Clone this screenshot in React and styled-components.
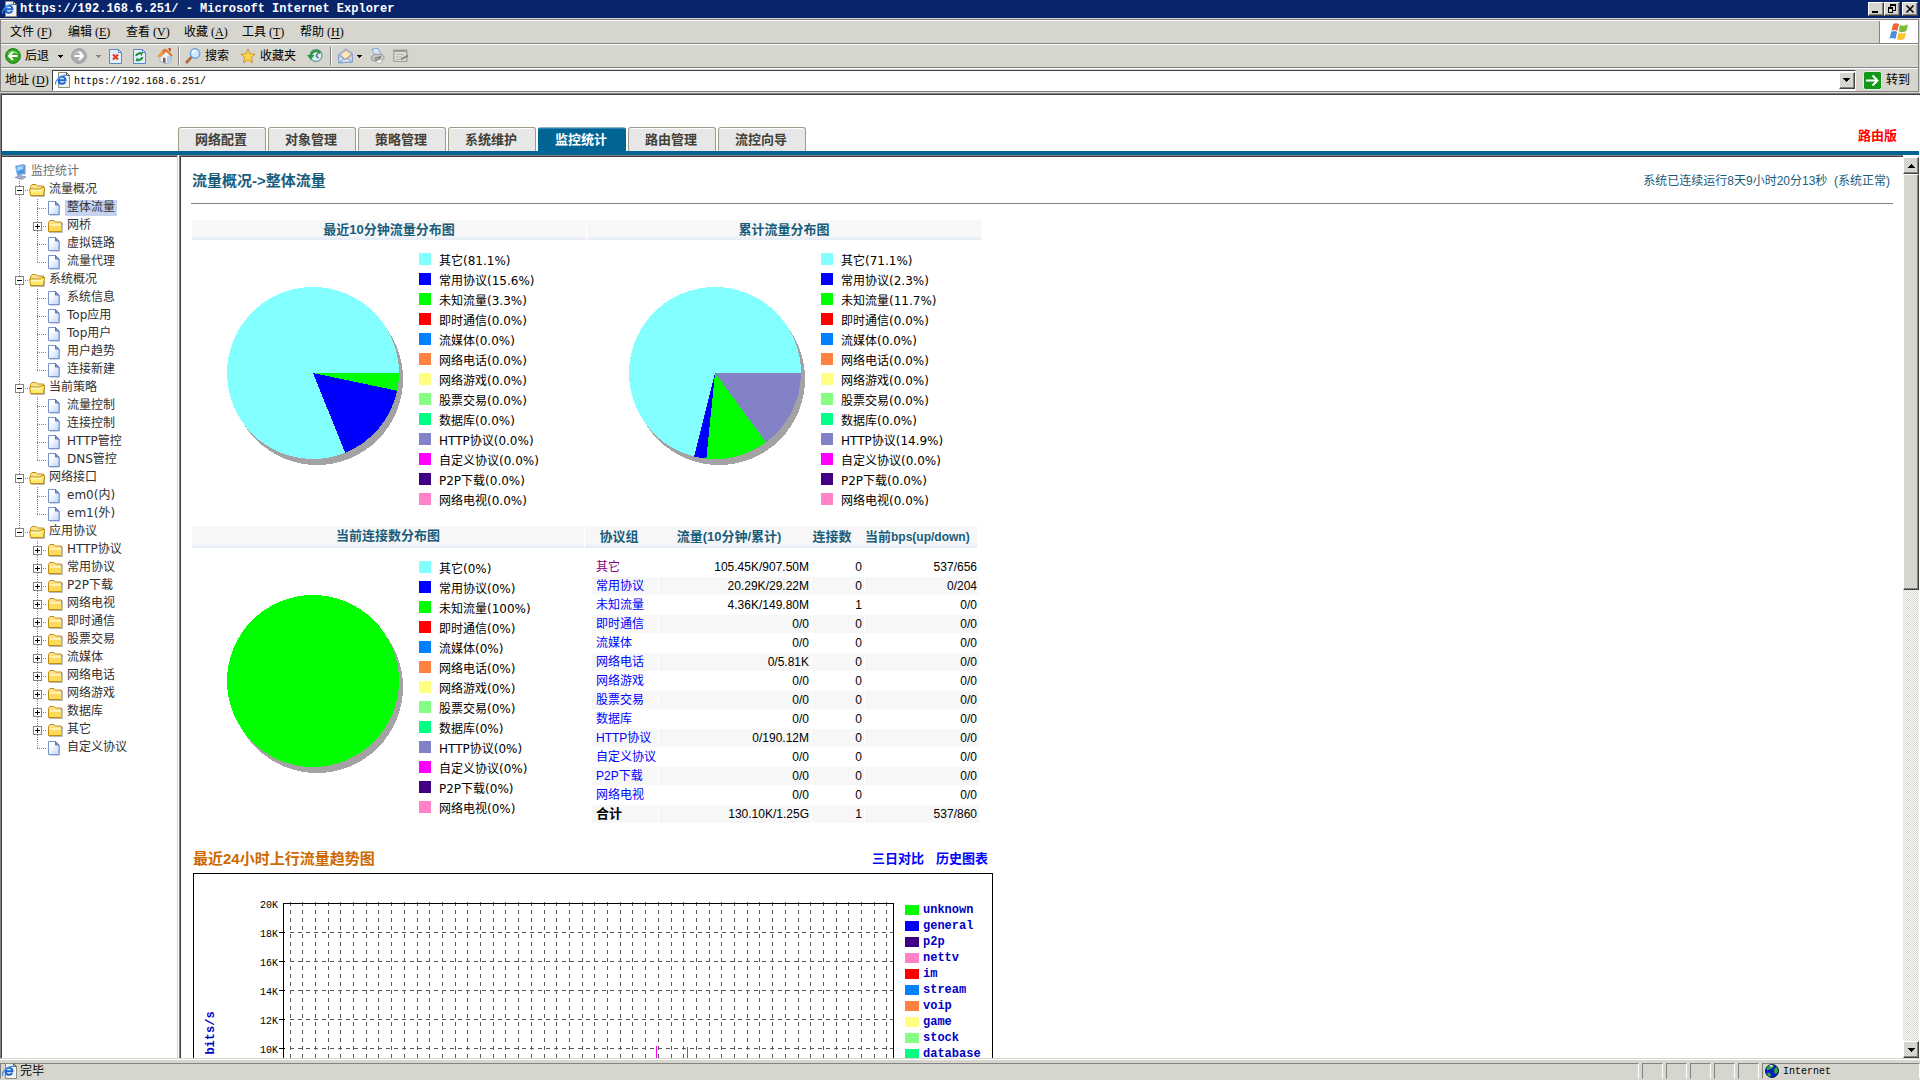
import React from 'react'
import styled, { createGlobalStyle, css } from 'styled-components';

const FACE = '#d6d6ce';
const GRAY = '#848284';
const DARK = '#424142';
const TEAL = '#185d7b';
const BLUE = '#006594';

const CJK = '"Noto Sans CJK SC", sans-serif';
const UI_FONT = `"Liberation Serif", ${CJK}`;
const MONO = `"Liberation Mono", ${CJK}`;
const VERDANA = `"DejaVu Sans", ${CJK}`;
const ARIAL = `"Liberation Sans", ${CJK}`;

const GlobalStyle = createGlobalStyle`
  * {
    box-sizing: border-box;
  }
  body {
    margin: 0;
    background: ${FACE};
    font-family: ${VERDANA};
    font-size: 12px;
    color: #000;
    overflow: hidden;
  }
  button {
    font: inherit;
    color: inherit;
    margin: 0;
    padding: 0;
    border: 0;
    background: none;
  }
  svg {
    display: block;
    flex-shrink: 0;
  }
`;

const Window = styled.div`
  display: flex;
  flex-direction: column;
  height: 100vh;
`;

const Flex = styled.div`
  display: flex;
  align-items: center;
`;

/* ---------- window chrome ---------- */

const TitleBar = styled(Flex)`
  height: 18px;
  flex-shrink: 0;
  padding: 0 2px;
  background: #08246b;
  color: #fff;
`;

const Title = styled.h1`
  flex: 1;
  margin: 0 0 0 2px;
  font: bold 12px/18px ${MONO};
`;

const raised = css`
  background: ${FACE};
  border: 1px solid;
  border-color: #fff ${DARK} ${DARK} #fff;
  box-shadow: inset -1px -1px 0 ${GRAY};
`;

const WindowButton = styled.button`
  ${raised}
  display: flex;
  align-items: center;
  justify-content: center;
  width: 16px;
  height: 14px;
  margin-left: ${(props) => (props.$apart ? 2 : 0)}px;
`;

const Rebar = styled.div`
  flex-shrink: 0;
  margin: 1px 1px 1px 0;
  border: 1px solid ${GRAY};
  border-bottom: 0;
`;

const Band = styled(Flex)`
  height: 24px;
  border-top: 1px solid #fff;
  border-bottom: 1px solid ${GRAY};
  font: 12px/20px ${UI_FONT};
`;

const Menu = styled.nav`
  display: flex;
  flex: 1;
  padding-left: 9px;
`;

const MenuItem = styled.button`
  width: 58px;
  text-align: left;
  white-space: nowrap;
`;

const Key = styled.span`
  margin-left: 3px;

  u {
    text-underline-offset: 2px;
  }
`;

const Brand = styled(Flex)`
  justify-content: center;
  width: 39px;
  height: 22px;
  background: #fff;
  border-left: 1px solid ${GRAY};
`;

const ToolButton = styled.button`
  display: flex;
  align-items: center;
  gap: 4px;
  margin-left: ${(props) => props.$gap || 0}px;
`;

const Divider = styled.i`
  width: 2px;
  height: 18px;
  margin-left: ${(props) => props.$gap}px;
  border-left: 1px solid ${GRAY};
  border-right: 1px solid #fff;
`;

const AddressLabel = styled.label`
  width: 51px;
  padding-left: 4px;
`;

const AddressBox = styled(Flex)`
  flex: 1;
  height: 21px;
  padding: 1px 0 1px 2px;
  background: #fff;
  border: 1px solid;
  border-color: ${DARK} #fff #fff ${DARK};
`;

const AddressInput = styled.input`
  flex: 1;
  min-width: 0;
  height: 17px;
  margin-left: 3px;
  padding: 2px 0 0;
  border: 0;
  outline: 0;
  font: 10px/15px ${MONO};
`;

const ArrowButton = styled.button`
  ${raised}
  display: flex;
  align-items: center;
  justify-content: center;
  width: 16px;
  height: 17px;
  flex-shrink: 0;
`;

const GoButton = styled.button`
  display: flex;
  align-items: center;
  gap: 4px;
  padding: 0 8px 0 7px;
`;

const StatusBar = styled.footer`
  display: flex;
  flex-shrink: 0;
  gap: 3px;
  height: 21px;
  padding-top: 3px;
  padding-bottom: 1px;
  border-top: 1px solid #fff;
`;

const StatusCell = styled(Flex)`
  flex: ${(props) => (props.$width ? `0 0 ${props.$width}px` : 1)};
  gap: ${(props) => (props.$mono ? 4 : 2)}px;
  padding-left: ${(props) => (props.$mono ? 2 : 1)}px;
  border: 1px solid;
  border-color: ${GRAY} #fff ${FACE} ${GRAY};
  font: ${(props) => (props.$mono ? `10px/15px ${MONO}` : `12px/15px ${UI_FONT}`)};
`;

/* ---------- page ---------- */

const Page = styled.div`
  display: flex;
  flex-direction: column;
  flex: 1;
  min-height: 0;
  background: #fff;
  border-top: 1px solid ${GRAY};
  border-left: 1px solid ${GRAY};
  border-bottom: 1px solid ${FACE};
  box-shadow: inset 1px 1px 0 ${DARK};
  padding: 1px 1px 0 1px;
`;

const Header = styled.header`
  display: flex;
  align-items: flex-end;
  height: 60px;
  flex-shrink: 0;
  padding-left: 176px;
  border-bottom: 4px solid ${BLUE};
`;

const Tabs = styled.nav`
  display: flex;
  flex: 1;
  gap: 2px;
`;

const Tab = styled.a`
  width: 88px;
  height: 24px;
  padding-right: 2px;
  border: 1px solid #9c9e8c;
  border-bottom: 0;
  border-radius: 3px 3px 0 0;
  box-shadow: inset 0 1px 0 #fff;
  background: #e7e7e7;
  color: #424139;
  font: bold 13px/24px ${ARIAL};
  text-align: center;
  text-decoration: none;

  ${(props) => props.$active && css`
    border-color: #8cb6ce ${BLUE} ${BLUE};
    box-shadow: inset 0 1px 0 #3182ad;
    background: ${BLUE};
    color: #fff;
  `}
`;

const Edition = styled.strong`
  align-self: flex-end;
  padding: 0 22px 5px 0;
  color: #f00;
  font: bold 13px/20px ${ARIAL};
`;

const Body = styled.div`
  display: flex;
  flex: 1;
  min-height: 0;
`;

const Sidebar = styled.aside`
  width: 176px;
  flex-shrink: 0;
  padding: 7px 0 0 9px;
  border-top: 1px solid ${GRAY};
  border-right: 1px solid ${FACE};
  box-shadow: inset 0 1px 0 ${DARK};
  margin-right: 1px;
  overflow: hidden;
`;

const TreeRow = styled.div`
  display: flex;
  height: 18px;
`;

const TreeLink = styled.a`
  height: 16px;
  margin-top: 1px;
  padding: 0 2px 2px;
  line-height: 14px;
  white-space: nowrap;
  text-decoration: none;
  color: ${(props) => (props.$root ? '#6b6d6b' : '#313031')};
  background: ${(props) => (props.$selected ? '#c6d3ef' : 'none')};
`;

const Content = styled.main`
  flex: 1;
  min-width: 0;
  padding: 2px 10px 0 11px;
  border-top: 1px solid ${GRAY};
  border-left: 1px solid ${GRAY};
  box-shadow: inset 1px 1px 0 ${DARK};
  overflow: hidden auto;
  scrollbar-width: none;
`;

const PageHead = styled(Flex)`
  justify-content: space-between;
  height: 46px;
  border-bottom: 1px solid ${GRAY};
  color: ${TEAL};
`;

const PageTitle = styled.h2`
  margin: 0 0 0 1px;
  font: bold 15px/20px ${ARIAL};
`;

const Uptime = styled.p`
  margin: 0 3px 0 0;
  font: 12px/20px ${ARIAL};
`;

const Report = styled.div`
  width: 802px;
  margin: 16px 0 0 1px;
`;

const PanelRow = styled.div`
  display: grid;
  grid-template-columns: ${(props) => props.$columns};
  gap: 1px;
`;

const band = css`
  background: linear-gradient(#f7f7f7 80%, #eff3f7 85%, #e7ebf7) no-repeat;
`;

const PanelTitle = styled.h3`
  ${band}
  height: ${(props) => props.$height}px;
  margin: 0;
  color: ${TEAL};
  font: bold 13px/19px ${ARIAL};
  text-align: center;
`;

const PanelBody = styled.div`
  display: flex;
  gap: 12px;
  padding: 13px 0 13px ${(props) => props.$indent}px;
`;

const PieSlot = styled.div`
  padding-top: 34px;
`;

const Legend = styled.ul`
  margin: 0;
  padding: 0;
  list-style: none;
`;

const LegendItem = styled.li`
  display: flex;
  gap: 8px;
  height: 20px;
  line-height: 16px;
  white-space: nowrap;
`;

const Swatch = styled.i`
  width: 12px;
  height: 12px;
  background: ${(props) => props.$color};
`;

const TablePanel = styled.div`
  ${band}
  background-size: 392px 22px;
  padding-left: 6px;
`;

const Table = styled.table`
  width: 389px;
  table-layout: fixed;
  border-collapse: separate;
  border-spacing: 1px;
  font: 12px/18px ${ARIAL};

  th, td {
    padding: 0 2px 0 4px;
    height: 18px;
    white-space: nowrap;
  }
  thead th {
    height: 30px;
    padding: 0 12px 0 0;
    line-height: 19px;
    font-size: 13px;
    color: ${TEAL};
    vertical-align: top;
  }
  thead small {
    font-size: 12px;
  }
  thead th:last-child {
    text-align: left;
  }
  td {
    text-align: right;
  }
  tbody th {
    text-align: left;
    font-weight: normal;
  }
  tbody th strong {
    font-size: 13px;
  }
  tbody tr:nth-child(even) > * {
    background: #f7f7f7;
  }
`;

const ProtoLink = styled.a`
  color: ${(props) => (props.$visited ? '#840084' : '#00f')};
  text-decoration: none;
`;

const TrendHead = styled(Flex)`
  height: 26px;
  margin-top: 13px;
  padding: 0 6px 2px 1px;
`;

const TrendTitle = styled.h3`
  flex: 1;
  margin: 0;
  color: #ce6900;
  font: bold 15px/20px ${ARIAL};
`;

const TrendLink = styled.a`
  margin-left: 12px;
  color: #00f;
  font: bold 13px/20px ${ARIAL};
  text-decoration: none;
`;

const TrendBox = styled.div`
  margin-left: 1px;
  width: 800px;
  border: 1px solid #000;
`;

const ScrollBar = styled.div`
  display: flex;
  flex-direction: column;
  width: 16px;
  margin-top: 2px;
  flex-shrink: 0;
  background: repeating-conic-gradient(#fff 0 25%, ${FACE} 0 50%) 0 0 / 2px 2px;
`;

const Track = styled.div`
  flex: 1;
`;

const Thumb = styled.div`
  ${raised}
  height: 48%;
`;

/* ---------- icons ---------- */

const IePage = () => (
  <svg width="16" height="16" viewBox="0 0 16 16">
    <path d="M3.5 .5h8l3 3v12h-11z" fill="#f3f3ee" stroke="#8c8e84" />
    <path d="M11.5 .5v3h3z" fill="#fff" stroke="#5a5a5a" />
    <path d="M10.5 8.2H3.6a3.4 3.4 0 1 1 6.9 0zM3.6 8.2c0 4 4.8 4.6 6.6 1.8" fill="none" stroke="#1c62d8" strokeWidth="2" />
    <path d="M1 12.6C-1 10 4 4 11.4 3.2" fill="none" stroke="#3f94ef" strokeWidth="1.2" />
  </svg>
);

const Caret = ({ up }) => (
  <svg width="7" height="4" viewBox="0 0 7 4" shapeRendering="crispEdges">
    <path d={up ? 'M0 4h7L3.5 0z' : 'M0 0h7L3.5 4z'} />
  </svg>
);

const SmallCaret = ({ color = '#000' }) => (
  <svg width="5" height="3" viewBox="0 0 5 3" shapeRendering="crispEdges">
    <path d="M0 0h5v1H4v1H3v1H2V2H1V1H0z" fill={color} />
  </svg>
);

const RoundArrow = ({ forward }) => (
  <svg width="16" height="16" viewBox="0 0 16 16">
    <circle cx="8" cy="8" r="7.4" fill={forward ? '#adaeab' : '#2fa81d'} stroke={forward ? '#9c9e9c' : '#1b7e12'} />
    <path d="M2.6 6.4a6 6 0 0 1 10.8 0C10 4.4 6 4.6 2.6 6.4z" fill={forward ? '#c9cac7' : '#8bdc6c'} />
    <path
      d={forward ? 'M3.5 8h8M8 4l4 4-4 4' : 'M12.5 8h-8M8 4L4 8l4 4'}
      fill="none"
      stroke="#fff"
      strokeWidth="2"
    />
  </svg>
);

const StopIcon = () => (
  <svg width="13" height="15" viewBox="0 0 13 15">
    <path d="M.5 .5h9l3 3v11H.5z" fill="#e4effd" stroke="#5d86c9" />
    <path d="M9.5 .5v3h3z" fill="#fff" stroke="#5d86c9" />
    <path d="M4 5.500l5 5M9 5.500l-5 5" stroke="#e8361b" strokeWidth="2" />
  </svg>
);

const RefreshIcon = () => (
  <svg width="13" height="15" viewBox="0 0 13 15">
    <path d="M.5 .5h9l3 3v11H.5z" fill="#e4effd" stroke="#5d86c9" />
    <path d="M9.5 .5v3h3z" fill="#fff" stroke="#5d86c9" />
    <path d="M3.2 7C3.500 4.800 5.500 4 7 5M9.300 8c-.3 2.500-2.300 3.200-3.800 2.200" fill="none" stroke="#12932c" strokeWidth="2" />
    <path d="M6 3l4 .5L8.500 7zM6.500 12.500l-4-.5L4 8.500z" fill="#12932c" />
  </svg>
);

const HomeIcon = () => (
  <svg width="16" height="16" viewBox="0 0 16 16">
    <path d="M3 7.5v6l7 2.300 4.500-2V7.500L9 3z" fill="#eef3fb" stroke="#8ba6cf" strokeWidth=".8" />
    <path d="M10 15.800V8l4.500-1v7z" fill="#b8cdea" />
    <path d="M0 8.200L6 1.800 9.500 1 5 8.500l-2.500 1z" fill="#f0a04c" />
    <path d="M5.500 2L9 .8l7 6.600-2 1-5-5L6 7z" fill="#e0752c" />
    <path d="M11.500 0h2.300v4l-2.300-2z" fill="#bd4b21" />
    <path d="M6 9.500l2.500.6v5L6 14.300z" fill="#8a5a3a" />
  </svg>
);

const SearchIcon = () => (
  <svg width="16" height="16" viewBox="0 0 16 16">
    <path d="M1 15l6-6.500" stroke="#b56a3c" strokeWidth="2.600" />
    <circle cx="10" cy="5.500" r="4.700" fill="#cfe8fd" stroke="#6f9fdc" strokeWidth="1.400" />
    <path d="M7.500 5a3 3 0 0 1 3-2.500" fill="none" stroke="#fff" strokeWidth="1.400" />
  </svg>
);

const StarIcon = () => (
  <svg width="16" height="16" viewBox="0 0 16 16">
    <path
      d="M8 1l1.900 4.900 5.300.3-4.100 3.300 1.400 5.200L8 11.800l-4.500 2.900 1.400-5.200L.8 6.200l5.300-.3z"
      fill="#fddc4c"
      stroke="#d3912a"
    />
  </svg>
);

const HistoryIcon = () => (
  <svg width="16" height="16" viewBox="0 0 16 16">
    <circle cx="9" cy="7.500" r="6" fill="#d8ebf2" stroke="#7fa0a8" strokeWidth="1.400" />
    <path d="M9 8l3-4M9 8l2.500 2" stroke="#355a86" strokeWidth="1.200" />
    <path d="M13.500 5A5.500 5.500 0 0 0 4 7" fill="none" stroke="#2c9a3c" strokeWidth="2.400" />
    <path d="M0 7h7.500L3.700 12z" fill="#2c9a3c" />
  </svg>
);

const MailIcon = () => (
  <svg width="15" height="16" viewBox="0 0 15 16">
    <path d="M.7 6.500L8 1l6.300 4.500v8.500l-13.600 1z" fill="#cfe1f8" stroke="#7896c9" />
    <path d="M3 7l5-4.500 4.500 3.500v3L7 11.500z" fill="#fdebc0" stroke="#e2a24e" strokeWidth=".8" />
    <path d="M.7 7L7 11.500 14.300 6M1 15l5-4.500M14 14L9 10" fill="none" stroke="#7896c9" />
  </svg>
);

const PrinterIcon = () => (
  <svg width="15" height="16" viewBox="0 0 15 16">
    <path d="M2 1l6-.5L11 6.500 5 8z" fill="#d9e9fb" stroke="#6f95cf" strokeWidth=".8" />
    <path d="M1 9l4-3 7 .5 2.500 3-4 4.500L2 12.500z" fill="#c8c9c6" stroke="#8c8d89" strokeWidth=".8" />
    <path d="M4 10.500l7-2M5 12.500l6-3" stroke="#6e6f6c" />
    <path d="M6 13l4.500-1.500L13 14l-4.500 1.500z" fill="#fff" stroke="#999" strokeWidth=".6" />
  </svg>
);

const EditIcon = () => (
  <svg width="16" height="14" viewBox="0 0 16 14">
    <path d="M.8 1h13v11.500H.8z" fill="#dcdcd8" stroke="#9b9b98" strokeWidth="1.200" />
    <path d="M1 2h13" stroke="#9b9b98" strokeWidth="2" />
    <path d="M3 5.500h8M3 8h6M3 10.500h4" stroke="#b2b2af" />
    <path d="M8 10.500l7-4" stroke="#83837f" strokeWidth="2" />
  </svg>
);

const FlagIcon = () => (
  <svg width="20" height="18" viewBox="0 0 20 18">
    <path d="M4 1.200c2-1.400 4-1.400 6 0L8.400 8c-2-1.200-4-1.200-6 .2z" fill="#f0653a" />
    <path d="M11 1.700c2.500 1.400 5 1.200 8-.2L17.400 8c-2.600 1.400-5 1.600-7.600.3z" fill="#7cbc3c" />
    <path d="M2.100 9.200c2-1.400 4-1.400 6-.2L6.500 16c-2-1.200-4-1.200-6 0z" fill="#4a90dc" />
    <path d="M9.500 9.500c2.500 1.300 5 1.200 7.600-.3l-1.700 6.500c-2.600 1.500-5 1.700-7.500.3z" fill="#f9c331" />
  </svg>
);

const GoIcon = () => (
  <svg width="19" height="19" viewBox="0 0 19 19">
    <rect x=".5" y=".5" width="18" height="18" rx="2" fill="#129818" stroke="#e3f3df" />
    <path d="M3 9.500h11M9.500 4.500l5 5-5 5" fill="none" stroke="#fff" strokeWidth="2" />
  </svg>
);

const GlobeIcon = () => (
  <svg width="14" height="14" viewBox="0 0 14 14">
    <circle cx="7" cy="7" r="6.500" fill="#0a18c8" stroke="#10203c" />
    <path d="M1.500 4L5 1l4 1-2 2.500-3 1-2 1zM9 5l3-2 1.200 4-2 3-2-1zM2 9l2.500-.5L6 11l-1 2-2-1z" fill="#22b02e" />
    <path d="M4 1.500L7 .8l1.500 1.500L6 3z" fill="#d5dcd5" />
  </svg>
);

const ComputerIcon = () => (
  <svg width="18" height="18" viewBox="0 0 18 18">
    <path d="M4.500 3l8-1.500 1.500 9-7.500 2z" fill="#3f9cec" stroke="#9db8dd" />
    <path d="M6 4l5.500-1 .5 3-5.500 2z" fill="#a6dcff" />
    <path d="M12.500 1.500l2 .5v9l-1 1z" fill="#8291c4" />
    <path d="M4 14.500l5-2 6 1.500-4.500 2.500z" fill="#a9add0" stroke="#6d73a3" strokeWidth=".6" />
  </svg>
);

const FolderIcon = ({ open }) => (
  <svg width="18" height="18" viewBox="0 0 18 18">
    <path d="M2 15.500h13.500V6" fill="none" stroke="#bdbcb5" />
    <path d="M1.500 14.500v-9l1.500-2h4l1.500 1.500h6v9.500z" fill="#fbe289" stroke="#bf8d14" />
    {open
      ? <path d="M1.500 14.500L.6 8h11l1-1.500h3l-1.100 8z" fill="#ffe96a" stroke="#bf8d14" />
      : <path d="M2 7.500h12.500v6.500H2z" fill="#fdd95c" />}
    <path d={open ? 'M2 9.500h11' : 'M2.500 8h11.500'} stroke="#fff8c8" strokeWidth="1.500" />
  </svg>
);

const FileIcon = () => (
  <svg width="18" height="18" viewBox="0 0 18 18">
    <defs>
      <linearGradient id="sheet" x1="0" y1="0" x2="1" y2="1">
        <stop offset=".3" stopColor="#fff" />
        <stop offset="1" stopColor="#b9d5fb" />
      </linearGradient>
    </defs>
    <path d="M3 16h9.500V6" fill="none" stroke="#a9b3cf" />
    <path d="M1.500 2.500h7l3.500 3.500v9.500H1.500z" fill="url(#sheet)" stroke="#7b93cd" />
    <path d="M8.500 2.500V6H12z" fill="#7ea3ea" stroke="#5873b8" />
  </svg>
);

// guide lines and the expand box in front of a tree node
const Branch = ({ up, down, arm, box }) => (
  <svg width="18" height="18" viewBox="0 0 18 18" shapeRendering="crispEdges">
    <g stroke="#848284" strokeDasharray="1 1" fill="none">
      {up && <path d="M8.500 0v10" />}
      {down && <path d="M8.500 10v8" />}
      {arm && <path d="M8 9.500h10" />}
    </g>
    {box && (
      <g>
        <rect x="4.500" y="5.500" width="8" height="8" fill="#fff" stroke="#848284" />
        <path d="M6 9.500h5" stroke="#000" />
        {box === '+' && <path d="M8.500 7v5" stroke="#000" />}
      </g>
    )}
  </svg>
);

/* ---------- data ---------- */

const MENU = [['文件', 'F'], ['编辑', 'E'], ['查看', 'V'], ['收藏', 'A'], ['工具', 'T'], ['帮助', 'H']];

const TABS = ['网络配置', '对象管理', '策略管理', '系统维护', '监控统计', '路由管理', '流控向导'];

// a leading "+" marks a closed folder
const TREE = [
  ['流量概况', ['整体流量', '+网桥', '虚拟链路', '流量代理']],
  ['系统概况', ['系统信息', 'Top应用', 'Top用户', '用户趋势', '连接新建']],
  ['当前策略', ['流量控制', '连接控制', 'HTTP管控', 'DNS管控']],
  ['网络接口', ['em0(内)', 'em1(外)']],
  ['应用协议', ['+HTTP协议', '+常用协议', '+P2P下载', '+网络电视', '+即时通信', '+股票交易', '+流媒体',
    '+网络电话', '+网络游戏', '+数据库', '+其它', '自定义协议']],
];

const GROUPS = [
  ['其它', '#84ffff'],
  ['常用协议', '#0000ff'],
  ['未知流量', '#00ff00'],
  ['即时通信', '#ff0000'],
  ['流媒体', '#0082ff'],
  ['网络电话', '#ff8242'],
  ['网络游戏', '#ffff84'],
  ['股票交易', '#84ff84'],
  ['数据库', '#00ff84'],
  ['HTTP协议', '#8482c6'],
  ['自定义协议', '#ff00ff'],
  ['P2P下载', '#420084'],
  ['网络电视', '#ff82c6'],
];

const RECENT = [81.1, 15.6, 3.3, 0, 0, 0, 0, 0, 0, 0, 0, 0, 0];
const TOTAL = [71.1, 2.3, 11.7, 0, 0, 0, 0, 0, 0, 14.9, 0, 0, 0];
const CONNS = [0, 0, 100, 0, 0, 0, 0, 0, 0, 0, 0, 0, 0];

const TRAFFIC = [
  ['105.45K/907.50M', 0, '537/656'],
  ['20.29K/29.22M', 0, '0/204'],
  ['4.36K/149.80M', 1, '0/0'],
  ['0/0', 0, '0/0'],
  ['0/0', 0, '0/0'],
  ['0/5.81K', 0, '0/0'],
  ['0/0', 0, '0/0'],
  ['0/0', 0, '0/0'],
  ['0/0', 0, '0/0'],
  ['0/190.12M', 0, '0/0'],
  ['0/0', 0, '0/0'],
  ['0/0', 0, '0/0'],
  ['0/0', 0, '0/0'],
];

const SERIES = [
  ['unknown', '#00ff00'],
  ['general', '#0000ff'],
  ['p2p', '#420084'],
  ['nettv', '#ff82c6'],
  ['im', '#ff0000'],
  ['stream', '#0082ff'],
  ['voip', '#ff8242'],
  ['game', '#ffff84'],
  ['stock', '#84ff84'],
  ['database', '#00ff84'],
];

/* ---------- parts ---------- */

const Tree = () => (
  <div>
    <TreeRow>
      <ComputerIcon />
      <TreeLink href="#root" $root>监控统计</TreeLink>
    </TreeRow>
    {TREE.map(([name, children], i) => {
      const last = i === TREE.length - 1;
      return (
        <div key={name}>
          <TreeRow>
            <Branch up down={!last} arm box="-" />
            <FolderIcon open />
            <TreeLink href="#folder">{name}</TreeLink>
          </TreeRow>
          {children.map((child, j) => {
            const closed = child[0] === '+';
            return (
              <TreeRow key={child}>
                <Branch up={!last} down={!last} />
                <Branch up down={j < children.length - 1} arm box={closed && '+'} />
                {closed ? <FolderIcon /> : <FileIcon />}
                <TreeLink href="#item" $selected={child === '整体流量'}>{child.replace('+', '')}</TreeLink>
              </TreeRow>
            );
          })}
        </div>
      );
    })}
  </div>
);

const Pie = ({ values }) => {
  const r = 86;
  let angle = 0;

  // slices run counter-clockwise from three o'clock
  const slices = values.map((value, i) => {
    const start = angle;
    angle += (value / 100) * Math.PI * 2;
    if (value === 0) return null;
    if (value === 100) return <circle key={i} cx={r} cy={r} r={r} fill={GROUPS[i][1]} />;
    const point = (a) => `${r + r * Math.cos(a)} ${r - r * Math.sin(a)}`;
    const large = value > 50 ? 1 : 0;
    return <path key={i} d={`M${r} ${r}L${point(start)}A${r} ${r} 0 ${large} 0 ${point(angle)}z`} fill={GROUPS[i][1]} />;
  });

  return (
    <svg width="180" height="180" viewBox="0 0 180 180" shapeRendering="crispEdges">
      <circle cx={r + 4} cy={r + 6} r={r} fill="#a5a2a5" />
      {slices}
    </svg>
  );
};

const PieChart = ({ values, indent, digits = 1 }) => (
  <PanelBody $indent={indent}>
    <PieSlot>
      <Pie values={values} />
    </PieSlot>
    <Legend>
      {GROUPS.map(([name, color], i) => (
        <LegendItem key={name}>
          <Swatch $color={color} />
          {`${name}(${values[i].toFixed(digits)}%)`}
        </LegendItem>
      ))}
    </Legend>
  </PanelBody>
);

const TrafficTable = () => (
  <TablePanel>
    <Table>
      <colgroup>
        <col width="66" />
        <col width="152" />
        <col width="52" />
        <col />
      </colgroup>
      <thead>
        <tr>
          <th>协议组</th>
          <th>流量(10分钟/累计)</th>
          <th>连接数</th>
          <th>当前<small>bps(up/down)</small></th>
        </tr>
      </thead>
      <tbody>
        {TRAFFIC.map(([bytes, conns, bps], i) => (
          <tr key={GROUPS[i][0]}>
            <th><ProtoLink href="#group" $visited={i === 0}>{GROUPS[i][0]}</ProtoLink></th>
            <td>{bytes}</td>
            <td>{conns}</td>
            <td>{bps}</td>
          </tr>
        ))}
        <tr>
          <th><strong>合计</strong></th>
          <td>130.10K/1.25G</td>
          <td>1</td>
          <td>537/860</td>
        </tr>
      </tbody>
    </Table>
  </TablePanel>
);

const TrendChart = () => {
  const columns = Array.from({ length: 48 }, (_, i) => Math.floor(96 + i * 12.7) + 0.5);
  const rows = Array.from({ length: 6 }, (_, i) => 29.5 + i * 29);

  return (
    <svg width="798" height="200" viewBox="0 0 798 200" fontFamily={MONO}>
      <g shapeRendering="crispEdges" stroke="#5a595a" strokeDasharray="4 4">
        {columns.map((x) => <path key={x} d={`M${x} 28v172`} />)}
        {rows.slice(1).map((y) => <path key={y} d={`M96 ${y}h603`} />)}
      </g>
      <g shapeRendering="crispEdges" stroke="#000" fill="none">
        <path d="M89.500 200V29.500h610V200" />
        {rows.slice(1).map((y) => <path key={y} d={`M85 ${y}h6`} />)}
      </g>
      <path d="M462.500 172v28M493.500 173v27" stroke="#f0f" shapeRendering="crispEdges" />
      {rows.map((y, i) => (
        <text key={y} x="84" y={y + 4} textAnchor="end" fontSize="10">{`${20 - i * 2}K`}</text>
      ))}
      <text transform="translate(20 159) rotate(-90)" textAnchor="middle" fontSize="12" fontWeight="bold" fill="#0000c6">
        bits/s
      </text>
      {SERIES.map(([name, color], i) => (
        <g key={name}>
          <rect x="711" y={31 + i * 16} width="14" height="10" fill={color} />
          <text x="729" y={39 + i * 16} fontSize="12" fontWeight="bold" fill="#0000c6">{name}</text>
        </g>
      ))}
    </svg>
  );
};

const Chrome = () => (
  <>
    <TitleBar>
      <IePage />
      <Title>https://192.168.6.251/ - Microsoft Internet Explorer</Title>
      <WindowButton aria-label="最小化">
        <svg width="12" height="10"><path d="M2 8h6" stroke="#000" strokeWidth="2" /></svg>
      </WindowButton>
      <WindowButton aria-label="还原">
        <svg width="12" height="10" shapeRendering="crispEdges">
          <path d="M4 1h6M2 4h5" stroke="#000" strokeWidth="2" />
          <path d="M4.500 1v3M9.500 1v5.500H7M2.500 4v4.500h4V4" fill="none" stroke="#000" />
        </svg>
      </WindowButton>
      <WindowButton aria-label="关闭" $apart>
        <svg width="12" height="10"><path d="M2.500 1.500l7 7M9.500 1.500l-7 7" stroke="#000" strokeWidth="1.600" /></svg>
      </WindowButton>
    </TitleBar>
    <Rebar>
      <Band>
        <Menu>
          {MENU.map(([name, key]) => (
            <MenuItem key={key}>{name}<Key>(<u>{key}</u>)</Key></MenuItem>
          ))}
        </Menu>
        <Brand><FlagIcon /></Brand>
      </Band>
      <Band>
        <ToolButton $gap={4}><RoundArrow />后退</ToolButton>
        <ToolButton $gap={9} aria-label="后退列表"><SmallCaret /></ToolButton>
        <ToolButton $gap={8} aria-label="前进"><RoundArrow forward /></ToolButton>
        <ToolButton $gap={9} aria-label="前进列表"><SmallCaret color="#848284" /></ToolButton>
        <ToolButton $gap={8} aria-label="停止"><StopIcon /></ToolButton>
        <ToolButton $gap={11} aria-label="刷新"><RefreshIcon /></ToolButton>
        <ToolButton $gap={11} aria-label="主页"><HomeIcon /></ToolButton>
        <Divider $gap={5} />
        <ToolButton $gap={5}><SearchIcon />搜索</ToolButton>
        <ToolButton $gap={11}><StarIcon />收藏夹</ToolButton>
        <ToolButton $gap={11} aria-label="历史"><HistoryIcon /></ToolButton>
        <Divider $gap={7} />
        <ToolButton $gap={6} aria-label="邮件"><MailIcon /><SmallCaret /></ToolButton>
        <ToolButton $gap={8} aria-label="打印"><PrinterIcon /></ToolButton>
        <ToolButton $gap={8} aria-label="编辑"><EditIcon /></ToolButton>
      </Band>
      <Band>
        <AddressLabel htmlFor="address">地址<Key>(<u>D</u>)</Key></AddressLabel>
        <AddressBox>
          <IePage />
          <AddressInput id="address" defaultValue="https://192.168.6.251/" />
          <ArrowButton aria-label="地址列表"><Caret /></ArrowButton>
        </AddressBox>
        <GoButton><GoIcon />转到</GoButton>
      </Band>
    </Rebar>
  </>
);

const App = () => {
  return (
    <Window>
      <GlobalStyle />
      <Chrome />
      <Page>
        <Header>
          <Tabs>
            {TABS.map((tab) => (
              <Tab key={tab} href="#tab" $active={tab === '监控统计'}>{tab}</Tab>
            ))}
          </Tabs>
          <Edition>路由版</Edition>
        </Header>
        <Body>
          <Sidebar>
            <Tree />
          </Sidebar>
          <Content>
            <PageHead>
              <PageTitle>流量概况-&gt;整体流量</PageTitle>
              <Uptime>系统已连续运行8天9小时20分13秒&nbsp; (系统正常)</Uptime>
            </PageHead>
            <Report>
              <PanelRow $columns="394px 394px">
                <section>
                  <PanelTitle $height={20}>最近10分钟流量分布图</PanelTitle>
                  <PieChart values={RECENT} indent={35} />
                </section>
                <section>
                  <PanelTitle $height={20}>累计流量分布图</PanelTitle>
                  <PieChart values={TOTAL} indent={42} />
                </section>
              </PanelRow>
              <PanelRow $columns="392px 395px">
                <section>
                  <PanelTitle $height={22}>当前连接数分布图</PanelTitle>
                  <PieChart values={CONNS} indent={35} digits={0} />
                </section>
                <TrafficTable />
              </PanelRow>
              <TrendHead>
                <TrendTitle>最近24小时上行流量趋势图</TrendTitle>
                <TrendLink href="#compare">三日对比</TrendLink>
                <TrendLink href="#history">历史图表</TrendLink>
              </TrendHead>
              <TrendBox>
                <TrendChart />
              </TrendBox>
            </Report>
          </Content>
          <ScrollBar>
            <ArrowButton aria-label="向上滚动"><Caret up /></ArrowButton>
            <Track><Thumb /></Track>
            <ArrowButton aria-label="向下滚动"><Caret /></ArrowButton>
          </ScrollBar>
        </Body>
      </Page>
      <StatusBar>
        <StatusCell><IePage />完毕</StatusCell>
        <StatusCell $width={21} />
        <StatusCell $width={21} />
        <StatusCell $width={21} />
        <StatusCell $width={21} />
        <StatusCell $width={21} />
        <StatusCell $width={158} $mono><GlobeIcon />Internet</StatusCell>
      </StatusBar>
    </Window>
  )
}

export default App
